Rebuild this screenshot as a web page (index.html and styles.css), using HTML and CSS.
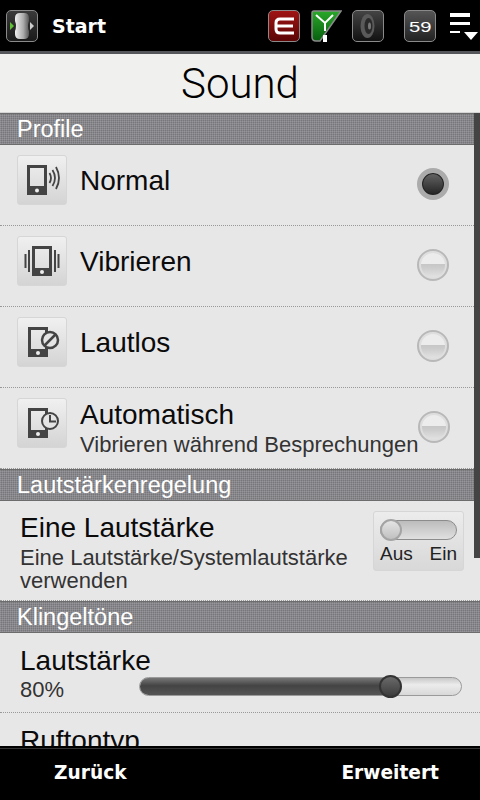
FILE: index.html
```html
<!DOCTYPE html>
<html lang="de">
<head>
    <meta charset="UTF-8">
    <meta name="viewport" content="width=device-width, initial-scale=1.0">
    <title>Sound</title>
    <link rel="stylesheet" href="styles.css">
</head>
<body>
    <div class="screen">
        <header class="topbar">
            <div class="start-icon status-icon">
                <svg width="30" height="30" viewBox="0 0 30 30">
                    <defs>
                        <linearGradient id="startBlob" x1="0" y1="0" x2="1" y2="0">
                            <stop offset="0" stop-color="#efefef"/>
                            <stop offset="0.6" stop-color="#aaa"/>
                            <stop offset="1" stop-color="#555"/>
                        </linearGradient>
                    </defs>
                    <path d="M8 7q0-5 5-5h4q5 0 5 5v3q-2 5 0 10v3q0 5-5 5h-4q-5 0-5-5v-3q2-5 0-10z" fill="url(#startBlob)"/>
                    <path d="M3 11l4 4-4 4z" fill="#5ec234"/>
                    <path d="M23 11l4 4-4 4z" fill="#cfcfcf"/>
                </svg>
            </div>
            <span class="start-label">Start</span>
            <div class="status-group">
                <div class="status-icon status-red">
                    <svg width="30" height="30" viewBox="0 0 30 30">
                        <path d="M25 8H11q-4 0-4 4v6q0 4 4 4h14M8 15h16" fill="none" stroke="#fff" stroke-width="3"/>
                    </svg>
                </div>
                <div class="signal-icon">
                    <svg width="32" height="32" viewBox="0 0 32 32">
                        <defs>
                            <linearGradient id="signalGreen" x1="0" y1="0" x2="0" y2="1">
                                <stop offset="0" stop-color="#2aa82a"/>
                                <stop offset="1" stop-color="#075f0e"/>
                            </linearGradient>
                        </defs>
                        <path d="M4 1h27L10 31H6q-4 0-4-4V3q0-2 2-2z" fill="url(#signalGreen)" stroke="#8a8a8a" stroke-width="1.500"/>
                        <path d="M6 5l9 8 8-8M15 13v8" fill="none" stroke="#fff" stroke-width="2"/>
                        <rect x="13" y="25" width="4" height="7" fill="#fff"/>
                    </svg>
                </div>
                <div class="status-icon status-speaker">
                    <svg width="30" height="30" viewBox="0 0 30 30">
                        <ellipse cx="14.500" cy="15" rx="7" ry="12" fill="#5a5a5a"/>
                        <ellipse cx="15.500" cy="15" rx="4" ry="8" fill="#2a2a2a"/>
                        <ellipse cx="16.500" cy="15" rx="1.500" ry="3.500" fill="#777"/>
                    </svg>
                </div>
                <div class="status-icon status-clock"><span class="clock-digits">59</span></div>
                <div class="menu-icon">
                    <svg width="30" height="30" viewBox="0 0 30 30">
                        <path d="M0 2h20v4H0zM0 11h20v3H0zM0 20h10v2H0z" fill="#fff"/>
                        <path d="M14 21h14l-7 8z" fill="#fff"/>
                    </svg>
                </div>
            </div>
        </header>

        <main class="content">
            <h1 class="page-title">Sound</h1>

            <h2 class="section-head">Profile</h2>
            <div class="profile-row">
                <div class="row-icon">
                    <svg width="36" height="36" viewBox="0 0 36 36">
                        <path d="M3 3h20v30H3zM6 6v18h14V6z" fill="#444" fill-rule="evenodd"/>
                        <circle cx="13" cy="28.500" r="2" fill="#eee"/>
                        <path d="M25.500 11q3 5 0 10M28.500 8q5 8 0 16M32 5q6 11 0 22" fill="none" stroke="#444" stroke-width="1.800"/>
                    </svg>
                </div>
                <span class="row-title row-single">Normal</span>
                <span class="radio radio-on"></span>
            </div>
            <div class="profile-row">
                <div class="row-icon">
                    <svg width="36" height="36" viewBox="0 0 36 36">
                        <path d="M8 3h20v30H8zM11 6v19h14V6z" fill="#444" fill-rule="evenodd"/>
                        <circle cx="18" cy="29" r="2" fill="#eee"/>
                        <path d="M5 7v22M1.500 11v14M31 7v22M34.500 11v14" fill="none" stroke="#444" stroke-width="2"/>
                    </svg>
                </div>
                <span class="row-title row-single">Vibrieren</span>
                <span class="radio"></span>
            </div>
            <div class="profile-row">
                <div class="row-icon">
                    <svg width="36" height="36" viewBox="0 0 36 36">
                        <path d="M4 3h20v30H4zM7 6v19h14V6z" fill="#444" fill-rule="evenodd"/>
                        <circle cx="14" cy="29" r="2" fill="#eee"/>
                        <circle cx="26" cy="16" r="8" fill="#e4e4e4" stroke="#444" stroke-width="2.500"/>
                        <path d="M20.500 21.500l11-11" stroke="#444" stroke-width="2.500"/>
                    </svg>
                </div>
                <span class="row-title row-single">Lautlos</span>
                <span class="radio"></span>
            </div>
            <div class="profile-row">
                <div class="row-icon">
                    <svg width="36" height="36" viewBox="0 0 36 36">
                        <path d="M4 3h20v30H4zM7 6v19h14V6z" fill="#444" fill-rule="evenodd"/>
                        <circle cx="14" cy="29" r="2" fill="#eee"/>
                        <circle cx="26" cy="16" r="8" fill="#e4e4e4" stroke="#444" stroke-width="2"/>
                        <path d="M26 10v6.500h6" fill="none" stroke="#444" stroke-width="2"/>
                    </svg>
                </div>
                <div class="row-text">
                    <span class="row-title">Automatisch</span>
                    <span class="row-sub">Vibrieren während Besprechungen</span>
                </div>
                <span class="radio"></span>
            </div>

            <h2 class="section-head">Lautstärkenregelung</h2>
            <div class="volume-row">
                <div class="volume-text">
                    <span class="row-title">Eine Lautstärke</span>
                    <span class="row-sub">Eine Lautstärke/Systemlautstärke verwenden</span>
                </div>
                <div class="toggle-box">
                    <div class="toggle-track"><span class="toggle-knob"></span></div>
                    <div class="toggle-labels"><span>Aus</span><span>Ein</span></div>
                </div>
            </div>

            <h2 class="section-head">Klingeltöne</h2>
            <div class="slider-row">
                <div class="slider-text">
                    <span class="row-title">Lautstärke</span>
                    <span class="row-sub">80%</span>
                </div>
                <div class="slider">
                    <div class="slider-fill" style="width: 80%"></div>
                    <span class="slider-knob"></span>
                </div>
            </div>
            <div class="plain-row">
                <span class="row-title">Ruftontyp</span>
            </div>

            <div class="scrollbar"></div>
        </main>

        <footer class="softkeys">
            <span>Zurück</span>
            <span>Erweitert</span>
        </footer>
    </div>
</body>
</html>
```

FILE: styles.css
```css
body {
    font-family: "Liberation Sans", Arial, sans-serif;
    background-color: #000;
    margin: 0;
    padding: 0;
}

.screen {
    display: flex;
    flex-direction: column;
    width: 480px;
    height: 800px;
    overflow: hidden;
}

.topbar {
    display: flex;
    align-items: center;
    flex: none;
    box-sizing: border-box;
    height: 54px;
    padding: 1px 0 0 6px;
    background-color: #000;
    border-bottom: 3px solid #55565a;
    color: #fff;
}

.start-label {
    margin-left: 14px;
    font-family: "DejaVu Sans", sans-serif;
    font-size: 19px;
    font-weight: bold;
}

.status-group {
    display: flex;
    align-items: center;
    margin-left: auto;
}

.status-icon {
    display: flex;
    align-items: center;
    justify-content: center;
    box-sizing: border-box;
    width: 32px;
    height: 32px;
    border: 1.500px solid #8a8a8a;
    border-radius: 5px;
    background: linear-gradient(#444, #111);
}

.start-icon {
    background: linear-gradient(#3a3a3a, #1a1a1a);
}

.status-red {
    margin-right: 10px;
    background: linear-gradient(#a01414, #5c0505);
}

.signal-icon {
    width: 32px;
    height: 32px;
    margin-right: 10px;
}

.status-clock {
    margin-left: 20px;
    margin-right: 14px;
    background: linear-gradient(#555, #222);
}

.clock-digits {
    color: #fff;
    font-size: 15px;
    transform: scaleX(1.35);
}

.menu-icon {
    width: 30px;
    height: 30px;
}

.content {
    position: relative;
    flex: 1;
    overflow: hidden;
    background-color: #e8e7e8;
}

.page-title {
    height: 58px;
    margin: 0;
    background-color: #f0f1ef;
    border-bottom: 1px solid #d4d4d4;
    color: #000;
    font-family: Roboto, "Liberation Sans", sans-serif;
    font-size: 42px;
    font-weight: 300;
    line-height: 60px;
    text-align: center;
}

.section-head {
    box-sizing: border-box;
    height: 32px;
    margin: 0;
    padding-left: 17px;
    background-color: #88888c;
    background-image:
        linear-gradient(90deg, rgba(255, 255, 255, 0.12) 50%, transparent 50%),
        linear-gradient(rgba(0, 0, 0, 0.12) 50%, transparent 50%);
    background-size: 2px 2px;
    border-top: 1px solid #6c6c6c;
    border-bottom: 1px solid #6c6c6c;
    color: #fff;
    font-size: 23.500px;
    font-weight: normal;
    line-height: 30px;
}

.profile-row {
    display: flex;
    align-items: center;
    box-sizing: border-box;
    height: 81px;
    padding: 0 31px 0 17px;
    border-bottom: 1px dotted #999;
}

.profile-row:nth-of-type(5) {
    border-bottom: none;
    height: 80px;
}

.row-icon {
    display: flex;
    align-items: center;
    justify-content: center;
    flex: none;
    width: 50px;
    height: 50px;
    box-sizing: border-box;
    margin-right: 13px;
    margin-bottom: 10px;
    border: 1px solid #d6d6d6;
    border-radius: 3px;
    background: linear-gradient(#f0f0f0, #d4d4d4);
}

.row-title {
    display: block;
    color: #0b0b0b;
    font-size: 28px;
    line-height: 30px;
}

.row-single {
    margin-bottom: 9px;
}

.row-sub {
    display: block;
    margin-top: 3px;
    color: #333;
    font-size: 22px;
    line-height: 23px;
}

.row-text {
    white-space: nowrap;
}

.radio {
    flex: none;
    box-sizing: border-box;
    width: 32px;
    height: 32px;
    margin-left: auto;
    margin-bottom: 2px;
    border: 2px solid #b8b8b8;
    border-radius: 50%;
    background: linear-gradient(#ececec 45%, #c6c6c6 46%, #cccccc 60%, #e6e6e6);
    box-shadow: inset 0 0 0 2px #dedede;
}

.radio-on {
    border: 5px solid #ababab;
    background: linear-gradient(#666, #222);
    box-shadow: inset 0 0 0 1px #222;
}

.volume-row {
    display: flex;
    box-sizing: border-box;
    height: 100px;
    padding: 12px 16px 0 20px;
    border-bottom: 1px dotted #999;
}

.volume-text {
    width: 345px;
}

.toggle-box {
    flex: none;
    box-sizing: border-box;
    width: 91px;
    height: 60px;
    margin-left: 8px;
    margin-top: -2px;
    padding: 8px 6px 0;
    border: 1px solid #d6d6d6;
    border-radius: 3px;
    background: linear-gradient(#ececec, #d8d8d8);
}

.toggle-track {
    height: 20px;
    box-sizing: border-box;
    border: 1px solid #8c8c8c;
    border-radius: 10px;
    background: linear-gradient(#bcbcbc, #e0e0e0);
}

.toggle-knob {
    display: block;
    box-sizing: border-box;
    width: 22px;
    height: 22px;
    margin: -2px 0 0 -1px;
    border: 2px solid #a4a4a4;
    border-radius: 50%;
    background: linear-gradient(#e4e4e4, #c0c0c0);
}

.toggle-labels {
    display: flex;
    justify-content: space-between;
    margin-top: 3px;
    color: #222;
    font-size: 19px;
    line-height: 22px;
}

.slider-row {
    display: flex;
    box-sizing: border-box;
    height: 80px;
    padding: 13px 18px 0 20px;
    border-bottom: 1px dotted #999;
}

.slider-text {
    width: 119px;
    flex: none;
    white-space: nowrap;
}

.slider-text .row-sub {
    margin-top: 2px;
}

.slider {
    position: relative;
    flex: 1;
    height: 19px;
    margin-top: 31px;
    box-sizing: border-box;
    border: 1px solid #9a9a9a;
    border-radius: 10px;
    background: linear-gradient(#c8c8c8, #ececec 40%, #d8d8d8);
}

.slider-fill {
    height: 100%;
    border-radius: 9px 0 0 9px;
    background: linear-gradient(#777, #444 45%, #555);
}

.slider-knob {
    position: absolute;
    top: -3px;
    left: 239px;
    box-sizing: border-box;
    width: 23px;
    height: 23px;
    border: 2px solid #333;
    border-radius: 50%;
    background: linear-gradient(#6a6a6a, #3c3c3c);
}

.plain-row {
    padding: 13px 20px 0;
}

.scrollbar {
    position: absolute;
    top: 59px;
    right: 0;
    width: 6px;
    height: 445px;
    background-color: #444;
}

.softkeys {
    display: flex;
    justify-content: space-between;
    flex: none;
    box-sizing: border-box;
    height: 54px;
    padding: 0 41px 0 54px;
    background-color: #000;
    border-top: 2px solid #000;
    box-shadow: inset 0 1px 0 #333;
    color: #fff;
    font-family: "DejaVu Sans", sans-serif;
    font-size: 18.600px;
    font-weight: bold;
    line-height: 50px;
}
```
